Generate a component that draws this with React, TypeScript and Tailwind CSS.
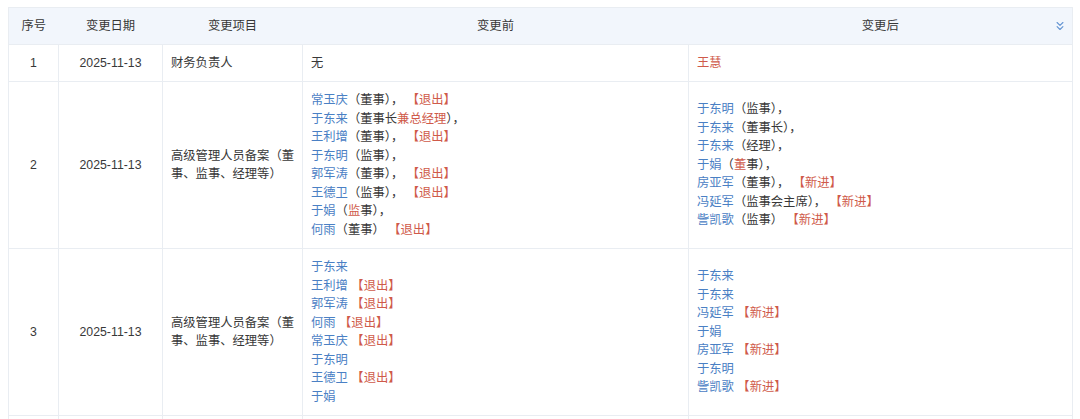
import React from 'react';
import { ChevronsDown } from 'lucide-react';

function B({ children }: { children: React.ReactNode }) {
  return <span className="text-[#4a80c4]">{children}</span>;
}

function R({ children }: { children: React.ReactNode }) {
  return <span className="text-[#cf5a4a]">{children}</span>;
}

const td = 'border border-[#e9edf2] py-[9px] px-2 align-middle';

function App(): React.ReactElement {
  return (
    <div className="min-h-screen bg-white pt-[7px] px-2 font-['Liberation_Sans','Noto_Sans_CJK_SC',sans-serif] text-[12.3px] leading-[18.5px] text-[#383838]">
      <table className="w-[1064px] table-fixed border-collapse border border-[#e9edf2]">
        <colgroup>
          <col className="w-[50px]" />
          <col className="w-[104px]" />
          <col className="w-[140px]" />
          <col className="w-[386px]" />
          <col className="w-[384px]" />
        </colgroup>
        <thead>
          <tr className="bg-[#f2f6fc]">
            <th className="py-[8.5px] font-normal text-center">序号</th>
            <th className="py-[8.5px] font-normal text-center">变更日期</th>
            <th className="py-[8.5px] font-normal text-center">变更项目</th>
            <th className="py-[8.5px] font-normal text-center">变更前</th>
            <th className="relative py-[8.5px] font-normal text-center">
              变更后
              <ChevronsDown size={14} strokeWidth={1.9} className="absolute right-[5px] top-[11px] text-[#6394d2]" />
            </th>
          </tr>
        </thead>
        <tbody>
          <tr>
            <td className={`${td} text-center`}>1</td>
            <td className={`${td} text-center`}>2025-11-13</td>
            <td className={td}>财务负责人</td>
            <td className={td}>无</td>
            <td className={td}><R>王慧</R></td>
          </tr>
          <tr>
            <td className={`${td} text-center`}>2</td>
            <td className={`${td} text-center`}>2025-11-13</td>
            <td className={td}>高级管理人员备案（董事、监事、经理等）</td>
            <td className={td}>
              <div><B>常玉庆</B>（董事），{' '}<R>【退出】</R></div>
              <div><B>于东来</B>（董事长<R>兼总经理</R>），</div>
              <div><B>王利增</B>（董事），{' '}<R>【退出】</R></div>
              <div><B>于东明</B>（监事），</div>
              <div><B>郭军涛</B>（董事），{' '}<R>【退出】</R></div>
              <div><B>王德卫</B>（监事），{' '}<R>【退出】</R></div>
              <div><B>于娟</B>（<R>监</R>事），</div>
              <div><B>何雨</B>（董事）{' '}<R>【退出】</R></div>
            </td>
            <td className={td}>
              <div><B>于东明</B>（监事），</div>
              <div><B>于东来</B>（董事长），</div>
              <div><B>于东来</B>（经理），</div>
              <div><B>于娟</B>（<R>董</R>事），</div>
              <div><B>房亚军</B>（董事），{' '}<R>【新进】</R></div>
              <div><B>冯延军</B>（监事会主席），{' '}<R>【新进】</R></div>
              <div><B>訾凯歌</B>（监事）{' '}<R>【新进】</R></div>
            </td>
          </tr>
          <tr>
            <td className={`${td} text-center`}>3</td>
            <td className={`${td} text-center`}>2025-11-13</td>
            <td className={td}>高级管理人员备案（董事、监事、经理等）</td>
            <td className={td}>
              <div><B>于东来</B></div>
              <div><B>王利增</B>{' '}<R>【退出】</R></div>
              <div><B>郭军涛</B>{' '}<R>【退出】</R></div>
              <div><B>何雨</B>{' '}<R>【退出】</R></div>
              <div><B>常玉庆</B>{' '}<R>【退出】</R></div>
              <div><B>于东明</B></div>
              <div><B>王德卫</B>{' '}<R>【退出】</R></div>
              <div><B>于娟</B></div>
            </td>
            <td className={td}>
              <div><B>于东来</B></div>
              <div><B>于东来</B></div>
              <div><B>冯延军</B>{' '}<R>【新进】</R></div>
              <div><B>于娟</B></div>
              <div><B>房亚军</B>{' '}<R>【新进】</R></div>
              <div><B>于东明</B></div>
              <div><B>訾凯歌</B>{' '}<R>【新进】</R></div>
            </td>
          </tr>
          <tr className="h-10">
            <td className="border border-[#e9edf2]"></td>
            <td className="border border-[#e9edf2]"></td>
            <td className="border border-[#e9edf2]"></td>
            <td className="border border-[#e9edf2]"></td>
            <td className="border border-[#e9edf2]"></td>
          </tr>
        </tbody>
      </table>
    </div>
  );
}

export default App;
